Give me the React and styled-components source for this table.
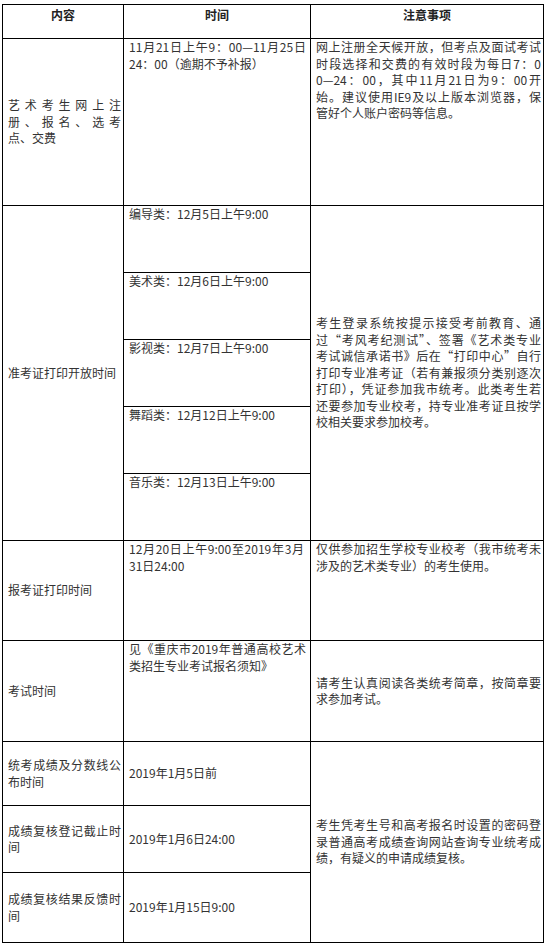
import React from "react";
import styled, { createGlobalStyle } from "styled-components";

const Global = createGlobalStyle`
  html, body { margin: 0; padding: 0; background: #fff; }
  body {
    font-family: "Noto Sans CJK SC", "Liberation Sans", sans-serif;
    font-size: 12px;
    color: #333;
  }
`;

const Page = styled.div`
  padding: 4px 0 0 2px;
`;

const Table = styled.table`
  border-collapse: collapse;
  table-layout: fixed;
  width: 541px;
`;

const Row = styled.tr`
  height: ${(p) => p.$h}px;
`;

const Head = styled.th`
  border: 1px solid #000;
  padding: 2px 4px 0 4px;
  vertical-align: top;
  text-align: center;
  font-weight: bold;
  color: #222;
  line-height: 16.5px;
`;

const Cell = styled.td`
  border: 1px solid #000;
  padding: 0 ${(p) => p.$pr ?? 2}px 0 5px;
  vertical-align: ${(p) => p.$v || "top"};
  text-align: justify;
  line-height: 16.5px;
  color: #333;
`;

const Line = styled.span`
  display: block;
  white-space: nowrap;
  text-align: justify;
  text-align-last: ${(p) => (p.$last ? "left" : "justify")};
`;

const Spaced = styled.span`
  display: block;
  text-align: justify;
`;

function Lines({ items }) {
  return items.map((t, i) => (
    <Line key={i} $last={i === items.length - 1}>
      {t}
    </Line>
  ));
}

export default function App() {
  return (
    <Page>
      <Global />
      <Table>
        <colgroup>
          <col style={{ width: 121 }} />
          <col style={{ width: 187 }} />
          <col style={{ width: 233 }} />
        </colgroup>
        <tbody>
          <Row $h={34}>
            <Head>内容</Head>
            <Head>时间</Head>
            <Head>注意事项</Head>
          </Row>
          <Row $h={167}>
            <Cell $v="middle">
              <Spaced>艺 术 考 生 网 上 注 册 、 报 名 、 选 考 点、交费</Spaced>
            </Cell>
            <Cell $pr={4}>
              <Lines items={["11月21日上午9：00—11月25日", "24：00（逾期不予补报）"]} />
            </Cell>
            <Cell>
              <Lines
                items={[
                  "网上注册全天候开放，但考点及面试考试",
                  "时段选择和交费的有效时段为每日7：0",
                  "0—24：00，其中11月21日为9：00开",
                  "始。建议使用IE9及以上版本浏览器，保",
                  "管好个人账户密码等信息。",
                ]}
              />
            </Cell>
          </Row>
          <Row $h={67}>
            <Cell $v="middle" rowSpan={5}>准考证打印开放时间</Cell>
            <Cell>编导类：12月5日上午9:00</Cell>
            <Cell $v="middle" rowSpan={5}>
              <Lines
                items={[
                  "考生登录系统按提示接受考前教育、通",
                  "过“考风考纪测试”、签署《艺术类专业",
                  "考试诚信承诺书》后在“打印中心”自行",
                  "打印专业准考证（若有兼报须分类别逐次",
                  "打印），凭证参加我市统考。此类考生若",
                  "还要参加专业校考，持专业准考证且按学",
                  "校相关要求参加校考。",
                ]}
              />
            </Cell>
          </Row>
          <Row $h={67}>
            <Cell>美术类：12月6日上午9:00</Cell>
          </Row>
          <Row $h={67}>
            <Cell>影视类：12月7日上午9:00</Cell>
          </Row>
          <Row $h={67}>
            <Cell>舞蹈类：12月12日上午9:00</Cell>
          </Row>
          <Row $h={67}>
            <Cell>音乐类：12月13日上午9:00</Cell>
          </Row>
          <Row $h={100}>
            <Cell $v="middle">报考证打印时间</Cell>
            <Cell $pr={6}>
              <Lines items={["12月20日上午9:00至2019年3月", "31日24:00"]} />
            </Cell>
            <Cell>
              <Lines items={["仅供参加招生学校专业校考（我市统考未", "涉及的艺术类专业）的考生使用。"]} />
            </Cell>
          </Row>
          <Row $h={101}>
            <Cell $v="middle">考试时间</Cell>
            <Cell $pr={4}>
              <Lines items={["见《重庆市2019年普通高校艺术", "类招生专业考试报名须知》"]} />
            </Cell>
            <Cell $v="middle">
              <Lines items={["请考生认真阅读各类统考简章，按简章要", "求参加考试。"]} />
            </Cell>
          </Row>
          <Row $h={64}>
            <Cell $v="middle">统考成绩及分数线公布时间</Cell>
            <Cell $v="middle">2019年1月5日前</Cell>
            <Cell $v="middle" rowSpan={3}>
              <Lines
                items={[
                  "考生凭考生号和高考报名时设置的密码登",
                  "录普通高考成绩查询网站查询专业统考成",
                  "绩，有疑义的申请成绩复核。",
                ]}
              />
            </Cell>
          </Row>
          <Row $h={67}>
            <Cell $v="middle">成绩复核登记截止时间</Cell>
            <Cell $v="middle">2019年1月6日24:00</Cell>
          </Row>
          <Row $h={70}>
            <Cell $v="middle">成绩复核结果反馈时间</Cell>
            <Cell $v="middle">2019年1月15日9:00</Cell>
          </Row>
        </tbody>
      </Table>
    </Page>
  );
}
